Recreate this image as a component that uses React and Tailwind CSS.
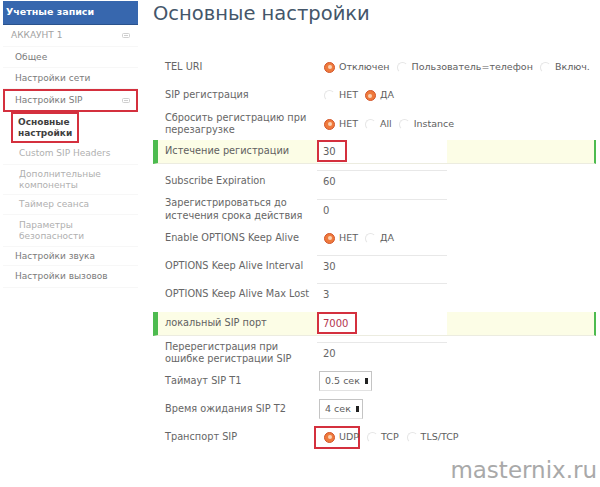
import React from 'react';

const FONT = { fontFamily: '"DejaVu Sans", "Open Sans", sans-serif' };

function ToggleIcon() {
  return (
    <svg width="8" height="5" viewBox="0 0 8 5" className="shrink-0">
      <rect x="0.5" y="0.5" width="7" height="4" rx="1" fill="none" stroke="#cfcfcf" strokeWidth="1" />
      <line x1="2" y1="2.5" x2="6" y2="2.5" stroke="#cfcfcf" strokeWidth="1" />
    </svg>
  );
}

function Radio({ on }) {
  if (on) {
    return (
      <span className="flex h-[11px] w-[11px] shrink-0 items-center justify-center rounded-full border border-[#d2552a] bg-[#ef7a3c]">
        <span className="h-[4px] w-[4px] rounded-full bg-[#fbd3b4]" />
      </span>
    );
  }
  return (
    <span className="h-[11px] w-[11px] shrink-0 rounded-full border border-[#e6e6e6] border-b-transparent border-r-transparent" />
  );
}

function RadioGroup({ items }) {
  return (
    <div className="flex items-center pl-[7px] text-[9.5px] text-[#606060]">
      {items.map((it, i) => (
        <div key={i} className={`flex items-center gap-[4px] ${i > 0 ? 'ml-[7px]' : ''}`}>
          <Radio on={it.on} />
          <span className="whitespace-nowrap">{it.label}</span>
        </div>
      ))}
    </div>
  );
}

function TextValue({ value }) {
  return (
    <div className="flex h-[22px] w-[130px] items-center border-t border-[#e8e8e8] bg-white pl-[6px] text-[10px] text-[#666]">
      {value}
    </div>
  );
}

function MarkedValue({ value, box, color }) {
  return (
    <div className="flex h-[23px] w-[130px] bg-white">
      <div className={`flex h-[22px] items-center border-2 border-[#d4303e] pl-[4px] text-[10px] ${box} ${color}`}>
        {value}
      </div>
    </div>
  );
}

function Select({ value, width }) {
  return (
    <div
      className={`flex h-[20px] ${width} items-center justify-between border border-[#c4c4c4] border-b-[#e2e2e2] pl-[5px] pr-[3px] text-[9.5px] text-[#606060]`}
    >
      <span className="whitespace-nowrap">{value}</span>
      <span className="h-[6px] w-[3px] bg-[#222]" />
    </div>
  );
}

function Row({ label, children, h = 'h-[28px]', mt = '' }) {
  return (
    <div className={`flex w-[443px] items-center ${h} ${mt}`}>
      <div className="w-[164px] shrink-0 pl-[12px] text-[9.75px] leading-[12.5px] text-[#666]">{label}</div>
      {children}
    </div>
  );
}

function HlRow({ label, children, mt = '' }) {
  return (
    <div
      className={`flex h-[24px] w-[443px] items-center border-b border-l-[5px] border-r-[2px] border-b-[#ecece0] border-l-[#4dbb4f] border-r-[#4dbb4f] bg-[#fcfde6] ${mt}`}
    >
      <div className="w-[159px] shrink-0 pl-[7px] text-[9.75px] text-[#606060]">{label}</div>
      {children}
    </div>
  );
}

function SideItem({ children, h, pl = 'pl-[12px]', color = 'text-[#7a7a7a]', icon }) {
  return (
    <div className={`flex ${h} items-center justify-between border-b border-[#f7f7f7] ${pl} pr-[8px] text-[9px] leading-[11px] ${color}`}>
      <span>{children}</span>
      {icon && <ToggleIcon />}
    </div>
  );
}

export default function App() {
  return (
    <div className="relative flex h-[487px] w-[600px] overflow-hidden bg-white" style={FONT}>
      {/* sidebar */}
      <aside className="w-[140px] shrink-0 pl-[3px] pt-[1px]">
        <div className="flex h-[23px] w-[135px] items-center bg-[#3767ae] pl-[3px] text-[9.5px] font-bold text-white shadow-[0_1px_0_#2a528c]">
          Учетные записи
        </div>
        <div className="w-[135px]">
          <SideItem h="h-[23px]" pl="pl-[8px]" color="text-[#a2a2a2]" icon>
            АККАУНТ 1
          </SideItem>
          <SideItem h="h-[21px]">Общее</SideItem>
          <SideItem h="h-[21px]">Настройки сети</SideItem>
          <div className="flex h-[23px] items-center justify-between border-2 border-[#d4303e] pl-[10px] pr-[6px] text-[9px] text-[#7a7a7a]">
            <span>Настройки SIP</span>
            <ToggleIcon />
          </div>
          <div className="flex h-[31px] items-center pl-[8px]">
            <div className="flex h-[31px] w-[68px] items-center border-2 border-[#d4303e] pl-[5px] text-[9px] font-bold leading-[11px] text-[#3f3f3f]">
              Основные
              <br />
              настройки
            </div>
          </div>
          <SideItem h="h-[22px]" pl="pl-[16px]" color="text-[#b0b0b0]">Custom SIP Headers</SideItem>
          <SideItem h="h-[30px]" pl="pl-[16px]" color="text-[#b0b0b0]">
            Дополнительные
            <br />
            компоненты
          </SideItem>
          <SideItem h="h-[20px]" pl="pl-[16px]" color="text-[#b0b0b0]">Таймер сеанса</SideItem>
          <SideItem h="h-[32px]" pl="pl-[16px]" color="text-[#b0b0b0]">
            Параметры
            <br />
            безопасности
          </SideItem>
          <SideItem h="h-[19px]">Настройки звука</SideItem>
          <SideItem h="h-[22px]">Настройки вызовов</SideItem>
        </div>
      </aside>

      {/* main */}
      <main className="flex-1 pl-[13px]">
        <div className="h-[53px]">
          <h1 className="text-[19.5px] leading-[28px] text-[#44566a]">Основные настройки</h1>
        </div>

        <Row label="TEL URI">
          <RadioGroup
            items={[
              { on: true, label: 'Отключен' },
              { on: false, label: 'Пользователь=телефон' },
              { on: false, label: 'Включ.' },
            ]}
          />
        </Row>
        <Row label="SIP регистрация" h="h-[29px]">
          <RadioGroup
            items={[
              { on: false, label: 'НЕТ' },
              { on: true, label: 'ДА' },
            ]}
          />
        </Row>
        <Row label={<>Сбросить регистрацию при<br />перезагрузке</>}>
          <RadioGroup
            items={[
              { on: true, label: 'НЕТ' },
              { on: false, label: 'All' },
              { on: false, label: 'Instance' },
            ]}
          />
        </Row>
        <HlRow label="Истечение регистрации" mt="mt-[2px]">
          <MarkedValue value="30" box="w-[30px]" color="text-[#606060]" />
        </HlRow>
        <Row label="Subscribe Expiration" mt="mt-[3px]">
          <TextValue value="60" />
        </Row>
        <Row label={<>Зарегистрироваться до<br />истечения срока действия</>} h="h-[29px]">
          <TextValue value="0" />
        </Row>
        <Row label="Enable OPTIONS Keep Alive">
          <RadioGroup
            items={[
              { on: true, label: 'НЕТ' },
              { on: false, label: 'ДА' },
            ]}
          />
        </Row>
        <Row label="OPTIONS Keep Alive Interval">
          <TextValue value="30" />
        </Row>
        <Row label="OPTIONS Keep Alive Max Lost">
          <TextValue value="3" />
        </Row>
        <HlRow label="локальный SIP порт" mt="mt-[4px]">
          <MarkedValue value="7000" box="w-[40px]" color="text-[#b4344e]" />
        </HlRow>
        <Row label={<>Перерегистрация при<br />ошибке регистрации SIP</>} mt="mt-[3px]">
          <TextValue value="20" />
        </Row>
        <Row label="Таймаут SIP T1">
          <div className="pl-[2px]">
            <Select value="0.5 сек" width="w-[53px]" />
          </div>
        </Row>
        <Row label="Время ожидания SIP T2">
          <div className="pl-[2px]">
            <Select value="4 сек" width="w-[44px]" />
          </div>
        </Row>
        <Row label="Транспорт SIP">
          <div className="-ml-[3px] flex items-center text-[9.5px] text-[#606060]">
            <div className="flex h-[23px] w-[46px] items-center gap-[4px] overflow-visible whitespace-nowrap border-2 border-[#d4303e] pl-[8px]">
              <Radio on />
              <span>UDP</span>
            </div>
            <div className="ml-[7px] flex items-center gap-[3px]">
              <Radio on={false} />
              <span>TCP</span>
            </div>
            <div className="ml-[8px] flex items-center gap-[3px]">
              <Radio on={false} />
              <span>TLS/TCP</span>
            </div>
          </div>
        </Row>
      </main>

      <div className="absolute bottom-[3px] right-[3px] text-[23px] leading-[28px] text-[#a9a9a9]">masternix.ru</div>
    </div>
  );
}
